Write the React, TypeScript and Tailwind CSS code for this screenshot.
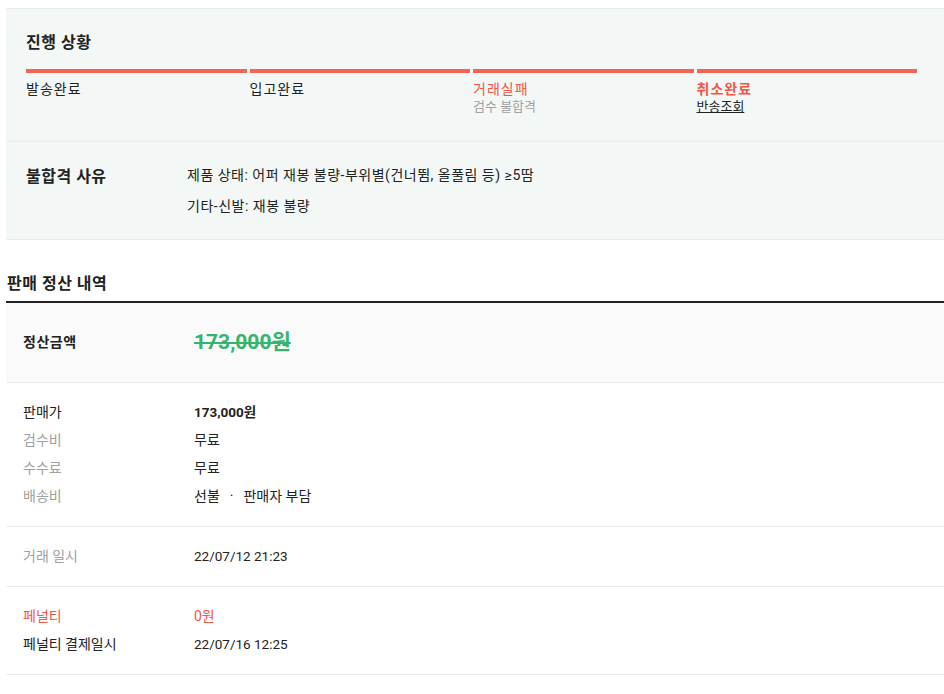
const font = "font-['Roboto','Noto_Sans_CJK_KR',sans-serif]"

const steps = [
  { title: '발송완료', color: 'text-[#222]' },
  { title: '입고완료', color: 'text-[#222]' },
  { title: '거래실패', color: 'text-[#f15746]', sub: '검수 불합격' },
  { title: '취소완료', color: 'text-[#f15746] font-bold', link: '반송조회' },
]

function Row({ label, value, labelColor = 'text-[#a0a0a0]', valueClass = 'text-[#222]' }: {
  label: string
  value: React.ReactNode
  labelColor?: string
  valueClass?: string
}) {
  return (
    <div className="flex text-[14px] leading-[28px]">
      <div className={`w-[171px] shrink-0 ${labelColor}`}>{label}</div>
      <div className={valueClass}>{value}</div>
    </div>
  )
}

export default function App() {
  return (
    <div className={`${font} bg-white min-h-[694px] pl-[6px] pt-[8px] text-[#222]`}>
      {/* status panel */}
      <div className="bg-[#f3f8f6] border-t border-b border-[#ebebeb]">
        <div className="pl-[20px] pr-[27px] pt-[24px] pb-[25px] border-b border-[#ebebeb]">
          <h3 className="text-[16px] leading-[20px] font-bold tracking-[0.5px]">진행 상황</h3>
          <div className="grid grid-cols-4 gap-x-[3px] mt-[16px]">
            {steps.map((s) => (
              <div key={s.title}>
                <div className="h-[4px] bg-[#f36554]" />
                <p className={`mt-[7px] text-[14px] leading-[18px] tracking-[1px] ${s.color}`}>{s.title}</p>
                {s.sub && <p className="text-[13px] leading-[18px] text-[#a0a0a0]">{s.sub}</p>}
                {s.link && (
                  <a className="block text-[13px] leading-[18px] text-[#222] underline underline-offset-1">{s.link}</a>
                )}
              </div>
            ))}
          </div>
        </div>
        <div className="flex pl-[20px] pt-[18px] pb-[17px]">
          <h3 className="w-[161px] shrink-0 text-[16px] leading-[31px] font-bold tracking-[0.5px] mt-[1px]">불합격 사유</h3>
          <div className="text-[14px] leading-[31px] tracking-[0.5px]">
            <p>제품 상태: 어퍼 재봉 불량-부위별(건너뜀, 올풀림 등) ≥5땀</p>
            <p>기타-신발: 재봉 불량</p>
          </div>
        </div>
      </div>

      {/* settlement */}
      <h3 className="mt-[34px] pl-[1px] pb-[7px] text-[16px] leading-[20px] font-bold tracking-[0.5px]">판매 정산 내역</h3>
      <div className="border-t-2 border-[#222]">
        <div className="flex items-center bg-[#fafafa] pl-[17px] pt-[25px] pb-[26px] border-b border-[#ebebeb] leading-[28px]">
          <div className="w-[171px] shrink-0 text-[14px] font-bold tracking-[0.5px]">정산금액</div>
          <div className="text-[21px] font-bold text-[#34b56f] line-through decoration-2">173,000원</div>
        </div>
        <div className="pl-[17px] pt-[15px] pb-[16px] border-b border-[#ebebeb]">
          <Row label="판매가" labelColor="text-[#222]" value="173,000원" valueClass="text-[#222] font-bold text-[13.5px]" />
          <Row label="검수비" value="무료" />
          <Row label="수수료" value="무료" />
          <Row
            label="배송비"
            value={
              <span>
                선불<span className="mx-[10px]">·</span>판매자 부담
              </span>
            }
          />
        </div>
        <div className="pl-[17px] pt-[15px] pb-[16px] border-b border-[#ebebeb]">
          <Row label="거래 일시" value="22/07/12 21:23" valueClass="text-[#222] text-[13.5px]" />
        </div>
        <div className="pl-[17px] pt-[15px] pb-[16px] border-b border-[#ebebeb]">
          <Row label="페널티" labelColor="text-[#f15746]" value="0원" valueClass="text-[#f15746]" />
          <Row label="페널티 결제일시" labelColor="text-[#222]" value="22/07/16 12:25" valueClass="text-[#222] text-[13.5px]" />
        </div>
      </div>
    </div>
  )
}
